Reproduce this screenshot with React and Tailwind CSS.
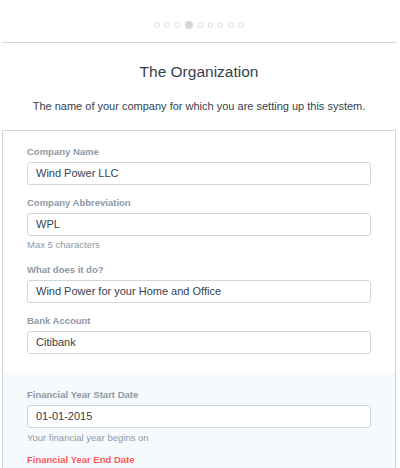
export default function App() {
  const dots = [0, 1, 2, 3, 4, 5, 6, 7, 8];
  const Field = ({ label, value, help, red, helpMt = "mt-[3px]", mb = "mb-[12px]" }) => (
    <div className={mb}>
      <div
        className={`text-[9.5px] leading-[12px] font-bold mb-[4px] ${red ? "text-[#ff5858]" : "text-[#8d99a6]"}`}
      >
        {label}
      </div>
      {value !== undefined && (
        <div className="h-[23px] border border-[#d1d8dd] rounded-[3px] bg-white flex items-center pl-[8px] text-[11px] text-[#36414c]">
          {value}
        </div>
      )}
      {help && (
        <div className={`${helpMt} text-[9.5px] leading-[12px] text-[#8d99a6]`}>{help}</div>
      )}
    </div>
  );
  return (
    <div
      className="w-[400px] h-[468px] overflow-hidden bg-white"
      style={{ fontFamily: '"Liberation Sans", Arial, sans-serif' }}
    >
      <div className="ml-[2px] mr-[4px]">
        <div className="h-[43px] border-b border-[#d1d8dd] flex items-center justify-center gap-[4.7px] pt-[8px]">
          {dots.map((i) =>
            i === 3 ? (
              <div key={i} className="w-[8px] h-[8px] rounded-full bg-[#d1d8dd]" />
            ) : (
              <div key={i} className="w-[5.5px] h-[5.5px] rounded-full border border-[#d8dee3]" />
            )
          )}
        </div>
        <div className="text-center text-[15.5px] leading-[20px] text-[#36414c] mt-[19px]">
          The Organization
        </div>
        <div className="text-center text-[11px] leading-[14px] text-[#36414c] mt-[17px]">
          The name of your company for which you are setting up this system.
        </div>
        <div className="mt-[17px] border border-[#d1d8dd]">
          <div className="px-[24px] pt-[15px] pb-[7px]">
            <Field label="Company Name" value="Wind Power LLC" />
            <Field label="Company Abbreviation" value="WPL" help="Max 5 characters" />
            <div className="h-[1px]" />
            <Field label="What does it do?" value="Wind Power for your Home and Office" />
            <Field label="Bank Account" value="Citibank" />
          </div>
          <div className="bg-[#f7fafc] px-[24px] pt-[16px] pb-[20px]">
            <Field
              label="Financial Year Start Date"
              value="01-01-2015"
              help="Your financial year begins on"
              helpMt="mt-[4px]"
              mb="mb-[10px]"
            />
            <Field label="Financial Year End Date" red />
          </div>
        </div>
      </div>
    </div>
  );
}
